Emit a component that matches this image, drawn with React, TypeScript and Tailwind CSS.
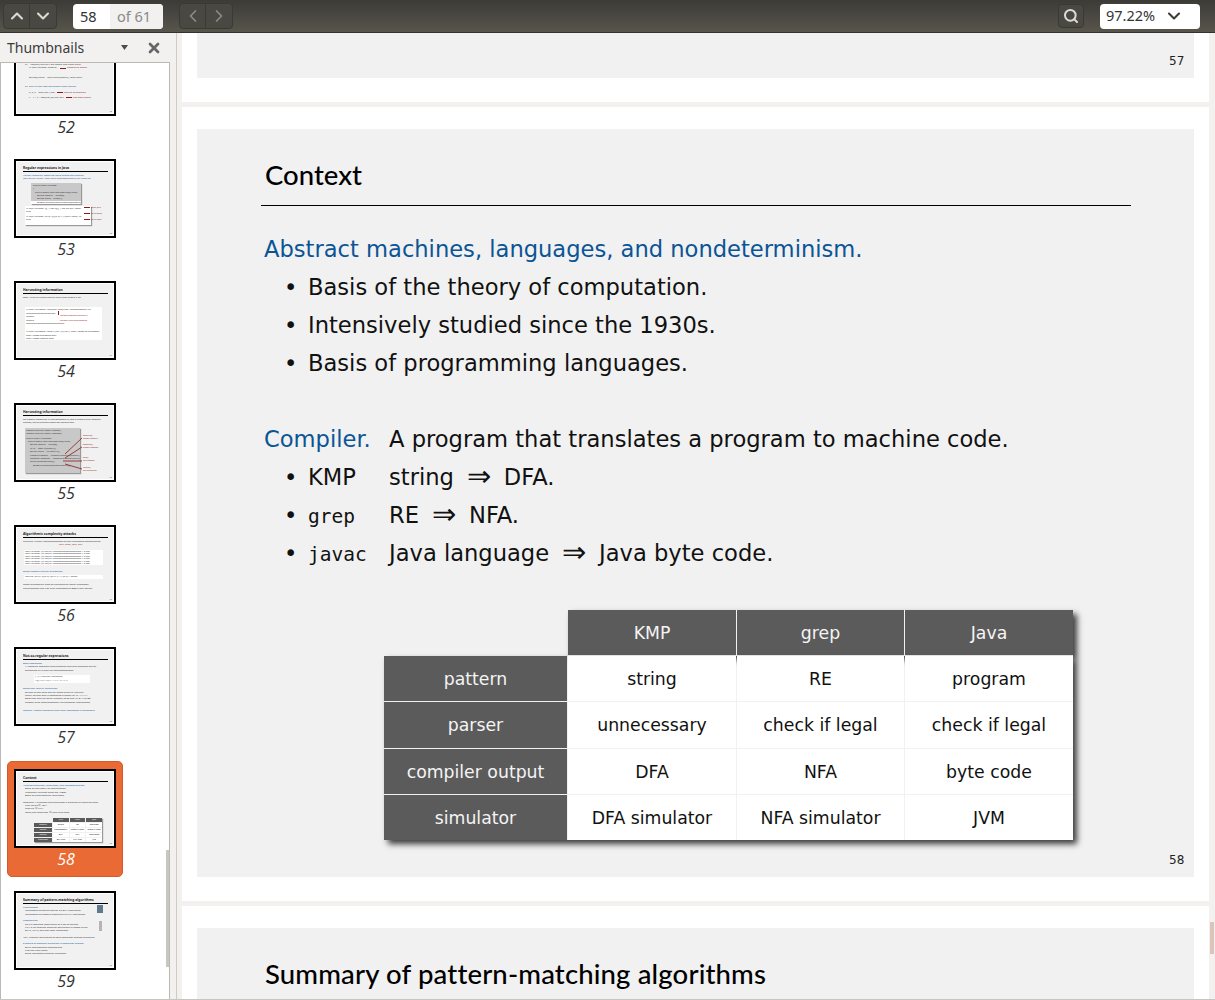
import type { ReactNode } from "react";
import { ChevronDown, ChevronLeft, ChevronRight, ChevronUp, Search, X } from "lucide-react";

const BLUE = "text-[#0b5596]";
const RED = "text-[#8b1a1a]";

function T({ children }: { children: ReactNode }) {
    return <div className="text-[3.4px] leading-[6px] font-bold text-[#222] border-b border-black w-[85px] pl-[0px]">{children}</div>;
}

function L({ children, c = "text-[#333]", ml = 0, lh = 3.4 }: { children: ReactNode; c?: string; ml?: number; lh?: number }) {
    return <div className={`text-[2.5px] whitespace-nowrap ${c}`} style={{ marginLeft: ml, lineHeight: `${lh}px` }}>{children}</div>;
}

function Thumb({ n, selected, children }: { n: number; selected?: boolean; children: ReactNode }) {
    return (
        <div className={`w-[116px] h-[116px] ml-[7px] mb-[6px] rounded-[5px] ${selected ? "bg-[#ea6a35] border border-[#d45a2a] pt-[7px] pl-[6px]" : "pt-[8px] pl-[7px]"}`}>
            <div className="w-[102px] h-[79px] border-2 border-black bg-white p-[1px]">
                <div className="w-[96px] h-[73px] bg-[#f1f1f1] pt-[3px] pl-[6px] overflow-hidden relative">
                    {children}
                    <span className="absolute right-[1px] bottom-0 text-[2px] text-[#555]">{n}</span>
                </div>
            </div>
            <div className={`text-center italic text-[16px] leading-[22px] w-[104px] font-['Open_Sans',sans-serif] ${selected ? "text-white" : "text-[#333]"}`}>{n}</div>
        </div>
    );
}

function GrayBtn({ children }: { children: ReactNode }) {
    return <div className="w-[26px] h-[24px] flex items-center justify-center text-[#dfdbd2]">{children}</div>;
}

function Toolbar() {
    return (
        <header className="h-[33px] shrink-0 flex items-center bg-gradient-to-b from-[#3c3b37] to-[#58554c] border-b border-[#33322e] pl-[3px] pr-[15px] font-['Noto_Sans',sans-serif]">
            <div className="flex rounded-[4px] border border-[#3a3934] bg-[#4a4842] divide-x divide-[#3a3934]">
                <GrayBtn><ChevronUp size={20} strokeWidth={2.5} /></GrayBtn>
                <GrayBtn><ChevronDown size={20} strokeWidth={2.5} /></GrayBtn>
            </div>
            <div className="ml-[16px] w-[90px] h-[25px] flex rounded-[4px] overflow-hidden bg-white text-[14.5px] leading-[25px]">
                <span className="w-[37px] pl-[7px] text-[#333]">58</span>
                <span className="flex-1 bg-[#f2f1f0] pl-[7px] text-[#8a8a8a]">of 61</span>
            </div>
            <div className="ml-[16px] flex rounded-[4px] border border-[#3a3934] bg-[#4a4842] divide-x divide-[#3a3934]">
                <GrayBtn><ChevronLeft size={20} strokeWidth={2} className="text-[#8f8c85]" /></GrayBtn>
                <GrayBtn><ChevronRight size={20} strokeWidth={2} className="text-[#8f8c85]" /></GrayBtn>
            </div>
            <div className="ml-auto w-[26px] h-[24px] rounded-[4px] border border-[#3a3934] bg-[#4a4842] flex items-center justify-center text-[#dfdbd2]">
                <Search size={16} strokeWidth={3} />
            </div>
            <div className="ml-[16px] w-[100px] h-[25px] flex items-center justify-between bg-white rounded-[4px] pl-[6px] pr-[16px] text-[14.5px] text-[#333]">
                <span>97.22%</span>
                <ChevronDown size={20} strokeWidth={2.5} className="text-[#3c3b37]" />
            </div>
        </header>
    );
}

function Sidebar() {
    return (
        <aside className="w-[177px] shrink-0 bg-[#f2f1f0] border-r border-[#cfccc6] flex flex-col font-['Noto_Sans',sans-serif]">
            <div className="h-[29px] shrink-0 flex items-center pl-[7px] pr-[14px] text-[14px] text-[#3c3c3c]">
                <span>Thumbnails</span>
                <svg className="ml-auto" width="7" height="5" viewBox="0 0 7 5"><path d="M0 0h7L3.5 5z" fill="#4c4c4c" /></svg>
                <X size={16} strokeWidth={4} className="ml-[18px] text-[#666]" />
            </div>
            <div className="relative flex-1 w-[170px] bg-white border-x border-[#bdb9b2] border-t overflow-hidden">
                <div className="-mt-[34px] -ml-[1px]">
                    <Thumb n={52}>
                        <div className="h-[20px]" />
                        <L ml={2}>a1 = foo(bar) baz qux reg match one from input</L>
                        <div className="flex items-center"><L ml={6}>% java Validate "regexp"</L><div className="ml-[3px] w-[6px] h-[1px] bg-[#8b1a1a]" /><L ml={1} c={RED}>pattern to match</L></div>
                        <div className="h-[6px]" />
                        <L ml={6}>String[] parts = input.split(regexp); read input</L>
                        <div className="h-[6px]" />
                        <L c={BLUE} ml={2}>Ex. find all the lines and match from groups</L>
                        <div className="h-[2px]" />
                        <div className="flex items-center"><L ml={6}>a, b, c = foo("bar") baz</L><div className="ml-[2px] w-[6px] h-[1px] bg-[#8b1a1a]" /><L ml={1} c={RED}>regular expression</L></div>
                        <div className="h-[2px]" />
                        <div className="flex items-center"><L ml={6}>x = y + z + foo(bar) [a] baz qux</L><div className="ml-[2px] w-[6px] h-[1px] bg-[#8b1a1a]" /><L ml={1} c={RED}>grouped match</L></div>
                    </Thumb>
                    <Thumb n={53}>
                        <T>Regular expressions in Java</T>
                        <div className="h-[2px]" />
                        <L c={BLUE}>Validity checking. Does the input match the regexp?</L>
                        <L c={BLUE}>Java string library. Use input.matches(regexp) for basic RE.</L>
                        <div className="ml-[8px] mt-[2px] w-[50px] h-[21px] bg-[#c8c8c8] shadow-[1px_1px_1px_#999] pt-[1px] overflow-hidden">
                            <L ml={2}>public class Validate</L>
                            <L ml={2}>{"{"}</L>
                            <L ml={4}>public static void main(String[] args)</L>
                            <L ml={6}>String regexp = args[0];</L>
                            <L ml={6}>String input = args[1];</L>
                            <div className="bg-white"><L ml={6}>StdOut.println(input.matches(regexp));</L></div>
                        </div>
                        <div className="mt-[2px] ml-[2px] w-[66px] h-[19px] bg-white shadow-[1px_1px_1px_#999] pt-[1px] overflow-hidden">
                            <L ml={1}>% java Validate "[$_A-Za-z][$_A-Za-z0-9]*" ident</L>
                            <L ml={1}>true</L>
                            <div className="h-[1px]" />
                            <L ml={1}>% java Validate "[a-z]+@([a-z]+\.)+(edu|com)" rs</L>
                            <L ml={1}>true</L>
                        </div>
                        <div className="absolute left-[67px] top-[45px] w-[6px] h-[1px] bg-[#8b1a1a]" />
                        <div className="absolute left-[67px] top-[51px] w-[6px] h-[1px] bg-[#8b1a1a]" />
                        <div className="absolute left-[67px] top-[57px] w-[6px] h-[1px] bg-[#8b1a1a]" />
                        <div className="absolute left-[74px] top-[43px] text-[2.2px] leading-[6px] text-[#8b1a1a]">legal Java<br />valid email<br />valid class</div>
                    </Thumb>
                    <Thumb n={54}>
                        <T>Harvesting information</T>
                        <div className="h-[2px]" />
                        <L>Goal. Print all substrings of input that match a RE.</L>
                        <div className="mt-[8px] ml-[2px] w-[77px] h-[33px] bg-white pt-[1px] overflow-hidden">
                            <L ml={1}>% java Harvester "gcg(cgg|agg)*ctg" chromosomeX.txt</L>
                            <L ml={1}>gcgcggcggcggcggcggctg</L>
                            <L ml={1}>gcgctg</L>
                            <L ml={1}>gcgctg</L>
                            <L ml={1}>gcgcggcggcggaggcggaggcggctg</L>
                            <div className="h-[5px]" />
                            <L ml={1}>% java Harvester "http://(\w+\.)*(\w+)" http://www.cs.princeton</L>
                            <L ml={1}>http://www.princeton.edu</L>
                            <L ml={1}>http://www.google.com</L>
                        </div>
                        <div className="absolute left-[41px] top-[27px] w-[1px] h-[4px] bg-[#8b1a1a]" />
                        <div className="absolute left-[43px] top-[30px] text-[2.2px] leading-[4px] text-[#8b1a1a] whitespace-nowrap">harvest patterns from DNA</div>
                        <div className="absolute left-[43px] top-[35px] text-[2.2px] leading-[4px] text-[#8b1a1a] whitespace-nowrap">harvest links from website</div>
                    </Thumb>
                    <Thumb n={55}>
                        <T>Harvesting information</T>
                        <div className="h-[2px]" />
                        <L>RE pattern matching is implemented in Java's Pattern and Matcher</L>
                        <L>classes, which support features beyond REs.</L>
                        <div className="mt-[3px] ml-[2px] w-[55px] h-[45px] bg-[#c8c8c8] shadow-[1px_1px_1px_#999] pt-[1px] overflow-hidden">
                            <L ml={1}>import java.util.regex.Pattern;</L>
                            <L ml={1}>import java.util.regex.Matcher;</L>
                            <div className="h-[1px]" />
                            <L ml={1}>public class Harvester</L>
                            <L ml={3}>public static void main(String[] args)</L>
                            <L ml={5}>String regexp = args[0];</L>
                            <L ml={5}>In in = new In(args[1]);</L>
                            <L ml={5}>String input = in.readAll();</L>
                            <L ml={5}>Pattern pattern = Pattern.compile(regexp);</L>
                            <L ml={5}>Matcher matcher = pattern.matcher(input);</L>
                            <L ml={5}>while (matcher.find())</L>
                            <L ml={8}>StdOut.println(matcher.group());</L>
                        </div>
                        <svg className="absolute left-[40px] top-[26px]" width="40" height="38" viewBox="0 0 40 38">
                            <path d="M8 22 25 6M8 26 25 15M6 29h19M8 32l17 5" stroke="#8b1a1a" strokeWidth=".8" fill="none" />
                        </svg>
                        <div className="absolute left-[66px] top-[28px] text-[2.2px] leading-[3px] text-[#8b1a1a] whitespace-nowrap">compile()<br />create Pattern</div>
                        <div className="absolute left-[66px] top-[37px] text-[2.2px] leading-[3px] text-[#8b1a1a] whitespace-nowrap">matcher()<br />create Matcher</div>
                        <div className="absolute left-[66px] top-[50px] text-[2.2px] leading-[3px] text-[#8b1a1a] whitespace-nowrap">find()<br />next match</div>
                        <div className="absolute left-[66px] top-[60px] text-[2.2px] leading-[3px] text-[#8b1a1a] whitespace-nowrap">group()<br />the substring</div>
                    </Thumb>
                    <Thumb n={56}>
                        <T>Algorithmic complexity attacks</T>
                        <div className="h-[2px]" />
                        <L>Warning. Typical implementations do not guarantee performance!</L>
                        <L ml={36} c={RED}>Unix grep, Java, Perl</L>
                        <div className="mt-[3px] ml-[1px] w-[79px] h-[15px] bg-white pt-[0px]">
                            {[0, 1, 2, 3, 4, 5].map(i => <L key={i} ml={1} lh={2.5}>java Validate "(a|aa)*b" aaaaaaaaaaaaaaaaaaaa 1.6 sec</L>)}
                        </div>
                        <div className="h-[5px]" />
                        <L c={BLUE}>SpamAssassin regular expression.</L>
                        <div className="mt-[2px] ml-[1px] w-[79px] h-[4px] bg-white"><L ml={1}>java RE "[a-z]+@[a-z]+([a-z\.]+\.)+[a-z]+" spam</L></div>
                        <div className="h-[4px]" />
                        <L>Takes exponential time on pathological email addresses.</L>
                        <L>Troublemaker can use such addresses to DOS a mail server.</L>
                    </Thumb>
                    <Thumb n={57}>
                        <T>Not-so-regular expressions</T>
                        <div className="h-[2px]" />
                        <L c={BLUE}>Back-references.</L>
                        <L ml={2}>\1 notation matches subexpression that was matched earlier.</L>
                        <L ml={2}>Supported by typical RE implementations.</L>
                        <div className="mt-[3px] ml-[11px] w-[56px] h-[8px] bg-white overflow-hidden"><L ml={1}>(.+)\1 beriberi couscous</L><L ml={1}>1?$|^(11+?)\1+ 1111 111111</L></div>
                        <div className="h-[4px]" />
                        <L c={BLUE}>Some non-regular languages.</L>
                        <L ml={2}>Strings of the form ww for some string w: beriberi.</L>
                        <L ml={2}>Unary strings with a composite number of 1s: 111111.</L>
                        <L ml={2}>Bitstrings with an equal number of 0s and 1s: 01110100.</L>
                        <L ml={2}>Watson-Crick complementary palindromes: atttcggaaat.</L>
                        <div className="h-[5px]" />
                        <L c={BLUE}>Remark. Pattern matching with back-references is intractable.</L>
                    </Thumb>
                    <Thumb n={58} selected>
                        <T>Context</T>
                        <div className="h-[2px]" />
                        <L c={BLUE}>Abstract machines, languages, and nondeterminism.</L>
                        <L ml={2}>Basis of the theory of computation.</L>
                        <L ml={2}>Intensively studied since the 1930s.</L>
                        <L ml={2}>Basis of programming languages.</L>
                        <div className="h-[3px]" />
                        <L>Compiler. A program that translates a program to machine code.</L>
                        <L ml={2}>KMP string ⇒ DFA.</L>
                        <L ml={2}>grep RE ⇒ NFA.</L>
                        <L ml={2}>javac Java language ⇒ Java byte code.</L>
                        <div className="mt-[4px] ml-[11px] w-[68px] grid grid-cols-[18px_1fr_1fr_1fr] gap-[1px] text-[2.2px] leading-[4px] text-center shadow-[1px_1px_1px_#999]">
                            <span /><span className="bg-[#5a5a5a] text-white">KMP</span><span className="bg-[#5a5a5a] text-white">grep</span><span className="bg-[#5a5a5a] text-white">Java</span>
                            <span className="bg-[#5a5a5a] text-white">pattern</span><span className="bg-white">string</span><span className="bg-white">RE</span><span className="bg-white">program</span>
                            <span className="bg-[#5a5a5a] text-white">parser</span><span className="bg-white">unnecessary</span><span className="bg-white">check if legal</span><span className="bg-white">check if legal</span>
                            <span className="bg-[#5a5a5a] text-white">output</span><span className="bg-white">DFA</span><span className="bg-white">NFA</span><span className="bg-white">byte code</span>
                            <span className="bg-[#5a5a5a] text-white">simulator</span><span className="bg-white">DFA sim</span><span className="bg-white">NFA sim</span><span className="bg-white">JVM</span>
                        </div>
                    </Thumb>
                    <Thumb n={59}>
                        <T>Summary of pattern-matching algorithms</T>
                        <div className="h-[2px]" />
                        <L c={BLUE}>Programmer.</L>
                        <L ml={2}>Implement substring search via DFA simulation.</L>
                        <L ml={2}>Implement RE pattern matching via NFA simulation.</L>
                        <div className="h-[3px]" />
                        <L c={BLUE}>Theoretician.</L>
                        <L ml={2}>RE is a compact description of a set of strings.</L>
                        <L ml={2}>NFA is an abstract machine equivalent in power to RE.</L>
                        <L ml={2}>DFAs, NFAs, and REs have limitations.</L>
                        <div className="h-[3px]" />
                        <L>You. Practical application of core computer science principles.</L>
                        <div className="h-[3px]" />
                        <L c={BLUE}>Example of essential paradigm in computer science.</L>
                        <L ml={2}>Build intermediate abstractions.</L>
                        <L ml={2}>Pick the right ones!</L>
                        <L ml={2}>Solve important practical problems.</L>
                        <div className="absolute left-[80px] top-[11px] w-[6px] h-[8px] bg-[#5f7a8c]" />
                        <div className="absolute left-[82px] top-[27px] w-[3px] h-[10px] bg-[#b5b5b5]" />
                    </Thumb>
                </div>
                <div className="absolute right-0 top-[787px] w-[3px] h-[117px] bg-[#c8c6c0]" />
            </div>
        </aside>
    );
}

const HEAD = "bg-[#5b5b5b] text-[#f4f4f4] flex items-center justify-center pt-[2px]";
const CELL = "bg-white text-[#111] flex items-center justify-center pt-[2px]";

const rows = [
    ["pattern", "string", "RE", "program"],
    ["parser", "unnecessary", "check if legal", "check if legal"],
    ["compiler output", "DFA", "NFA", "byte code"],
    ["simulator", "DFA simulator", "NFA simulator", "JVM"],
];

function CompareTable() {
    return (
        <div className="ml-[187px] mt-[38px] w-[689px] h-[230px] relative text-[17.3px]">
            <div className="absolute left-[184px] right-0 top-0 h-[46px] shadow-[4px_4px_6px_rgba(0,0,0,0.75)]" />
            <div className="absolute left-0 right-0 top-[46px] bottom-0 shadow-[4px_4px_6px_rgba(0,0,0,0.75)]" />
            <div className="relative grid grid-cols-[183px_168px_167px_168px] grid-rows-[45px_45px_46px_45px_45px] gap-[1px] bg-transparent">
                <div />
                {["KMP", "grep", "Java"].map(h => <div key={h} className={HEAD}>{h}</div>)}
                {rows.map(r => (
                    <div key={r[0]} className="contents">
                        <div className={HEAD}>{r[0]}</div>
                        <div className={CELL}>{r[1]}</div>
                        <div className={CELL}>{r[2]}</div>
                        <div className={CELL}>{r[3]}</div>
                    </div>
                ))}
            </div>
        </div>
    );
}

function Line({ children, className = "" }: { children: ReactNode; className?: string }) {
    return <div className={`h-[38px] leading-[38px] whitespace-pre ${className}`}>{children}</div>;
}

function Bullet({ children }: { children: ReactNode }) {
    return (
        <Line className="flex pl-[20px]">
            <span className="w-[24px]">•</span>
            {children}
        </Line>
    );
}

function Code({ w, children }: { w: number; children: ReactNode }) {
    return <span className="font-['DejaVu_Sans_Mono',monospace] text-[19.5px] pt-[2px]" style={{ width: w }}>{children}</span>;
}

function Arrow() {
    return <span className="mx-[13px] text-[29px] leading-[36px] font-light">⇒</span>;
}

function ContextSlide() {
    return (
        <div className="bg-white pt-[22px] pb-[24px] pl-[15px]">
            <div className="w-[997px] h-[748px] bg-[#f1f1f1] relative font-['DejaVu_Sans',sans-serif] text-[22.6px] text-[#111] pt-[24px]">
                <div className="mx-[64px] w-[870px] h-[53px] border-b border-black pl-[4px] font-['Lato',sans-serif] font-medium text-[27.5px] leading-[44px] text-black">Context</div>
                <div className="pl-[67px] pt-[24px]">
                    <Line className={BLUE}>Abstract machines, languages, and nondeterminism.</Line>
                    <Bullet>Basis of the theory of computation.</Bullet>
                    <Bullet>Intensively studied since the 1930s.</Bullet>
                    <Bullet>Basis of programming languages.</Bullet>
                    <div className="h-[38px]" />
                    <Line className="flex"><span className={`w-[125px] ${BLUE}`}>Compiler.</span>A program that translates a program to machine code.</Line>
                    <Bullet><span className="w-[81px]">KMP</span>string<Arrow />DFA.</Bullet>
                    <Bullet><Code w={81}>grep</Code>RE<Arrow />NFA.</Bullet>
                    <Bullet><Code w={81}>javac</Code>Java language<Arrow />Java byte code.</Bullet>
                </div>
                <CompareTable />
                <span className="absolute left-[972px] top-[722px] text-[12px] text-[#222]">58</span>
            </div>
        </div>
    );
}

export default function App() {
    return (
        <div className="h-screen w-[1215px] overflow-hidden flex flex-col bg-[#f2f1f0] border-b border-[#c8c5bf]">
            <Toolbar />
            <div className="flex flex-1 min-h-0">
                <Sidebar />
                <main className="relative flex-1 pl-[5px] pr-[6px] overflow-hidden flex flex-col gap-[5px]">
                    <div className="bg-white h-[69px] shrink-0 pl-[15px]">
                        <div className="w-[997px] h-[45px] bg-[#f1f1f1] relative font-['DejaVu_Sans',sans-serif]">
                            <span className="absolute left-[972px] top-[19px] text-[12px] text-[#222]">57</span>
                        </div>
                    </div>
                    <div className="shrink-0"><ContextSlide /></div>
                    <div className="bg-white pt-[22px] pl-[15px] flex-1">
                        <div className="w-[997px] h-full bg-[#f1f1f1] font-['Lato',sans-serif] font-medium pt-[25px] pl-[68px] text-[27.5px] tracking-[0.15px] text-black">Summary of pattern-matching algorithms</div>
                    </div>
                    <div className="absolute right-[1px] top-[889px] w-[4px] h-[32px] bg-[#dcc4bb]" />
                </main>
            </div>
        </div>
    );
}
